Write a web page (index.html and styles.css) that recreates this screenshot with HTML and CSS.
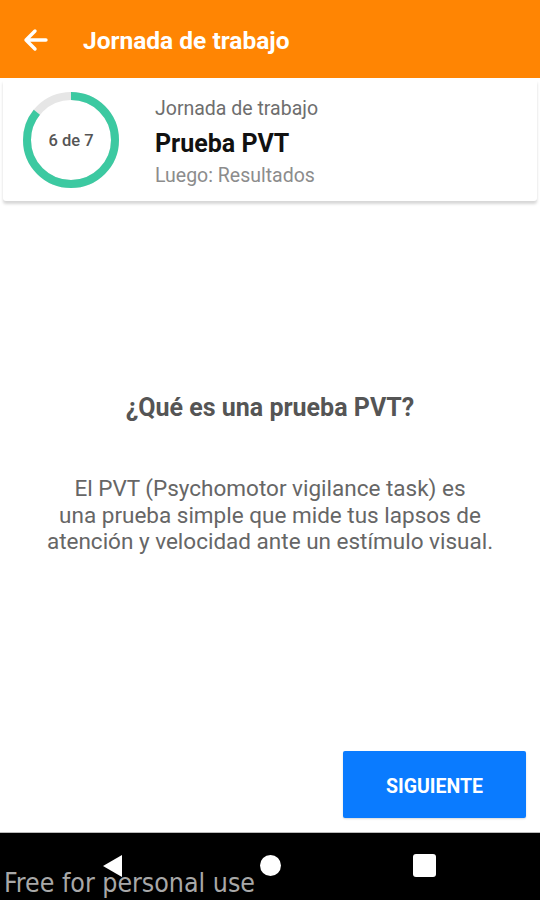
FILE: index.html
```html
<!DOCTYPE html>
<html lang="es">
<head>
<meta charset="utf-8">
<title>Jornada de trabajo</title>
<link rel="stylesheet" href="styles.css">
</head>
<body>
<div class="app">
  <header class="topbar">
    <svg class="back" width="26" height="24" viewBox="0 0 26 24">
      <path d="M24 12H4M13 3L4 12L13 21" fill="none" stroke="#fff" stroke-width="3.4" stroke-linecap="round" stroke-linejoin="round"/>
    </svg>
    <h1 class="title">Jornada de trabajo</h1>
  </header>

  <section class="card">
    <div class="ring">
      <svg width="96" height="96" viewBox="0 0 96 96">
        <circle cx="48" cy="48" r="44" fill="none" stroke="#e6e6e6" stroke-width="8"/>
        <circle cx="48" cy="48" r="44" fill="none" stroke="#3cc9a1" stroke-width="8"
          stroke-dasharray="236.99 276.46" transform="rotate(-90 48 48)"/>
      </svg>
      <span class="ring-label">6 de 7</span>
    </div>
    <div class="card-text">
      <div class="card-sub">Jornada de trabajo</div>
      <div class="card-title">Prueba PVT</div>
      <div class="card-next">Luego: Resultados</div>
    </div>
  </section>

  <main class="content">
    <h2 class="q">¿Qué es una prueba PVT?</h2>
    <p class="desc">El PVT (Psychomotor vigilance task) es<br>una prueba simple que mide tus lapsos de<br>atención y velocidad ante un estímulo visual.</p>
    <div class="actions">
      <button class="btn">SIGUIENTE</button>
    </div>
  </main>

  <nav class="navbar">
    <span class="nav-back"></span>
    <span class="nav-home"></span>
    <span class="nav-recent"></span>
    <span class="watermark">Free for personal use</span>
  </nav>
</div>
</body>
</html>
```

FILE: styles.css
```css
* { box-sizing: border-box; }
html, body { margin: 0; padding: 0; background: #fff; }
body { font-family: Roboto, "Noto Sans", Arial, sans-serif; }

.app {
  width: 540px;
  height: 900px;
  display: flex;
  flex-direction: column;
  overflow: hidden;
}

.topbar {
  height: 78px;
  flex: none;
  background: #ff8503;
  display: flex;
  align-items: center;
  padding-left: 22px;
  padding-top: 3px;
}
.back { display: block; margin-top: -2px; }
.title {
  margin: 0 0 0 35px;
  color: #fff;
  font-size: 24.5px;
  line-height: 30px;
  font-weight: 700;
}

.card {
  flex: none;
  height: 121px;
  margin: 2px 3px 0;
  background: #fff;
  display: flex;
  align-items: center;
  padding-left: 20px;
  box-shadow: 0 3px 3px rgba(0,0,0,0.16);
  border-radius: 0 0 3px 3px;
}
.ring {
  position: relative;
  width: 96px;
  height: 96px;
  flex: none;
  margin-top: -1px;
}
.ring svg { display: block; }
.ring-label {
  position: absolute;
  inset: 0;
  display: flex;
  align-items: center;
  justify-content: center;
  font-size: 16.5px;
  color: #555;
  font-weight: 500;
}
.card-text {
  margin-left: 36px;
  padding-top: 3px;
  display: flex;
  flex-direction: column;
}
.card-sub { font-size: 19.5px; color: #6e6e6e; line-height: 24px; }
.card-title { font-size: 25px; font-weight: 700; color: #111; line-height: 30px; margin-top: 8px; }
.card-next { font-size: 19.5px; color: #8c8c8c; line-height: 24px; margin-top: 5px; }

.content {
  flex: 1;
  display: flex;
  flex-direction: column;
  align-items: center;
  padding-top: 193px;
}
.q {
  margin: 0;
  font-size: 25px;
  line-height: 28px;
  font-weight: 700;
  color: #555;
}
.desc {
  margin: 53px 0 0;
  text-align: center;
  font-size: 22.5px;
  line-height: 26.5px;
  color: #666;
}
.actions {
  margin-top: auto;
  align-self: stretch;
  display: flex;
  justify-content: flex-end;
  padding: 0 14px 14px 0;
}
.btn {
  width: 183px;
  height: 67px;
  border: none;
  border-radius: 2px;
  background: #0a7bff;
  color: #fff;
  font-family: Roboto, Arial, sans-serif;
  font-size: 19.5px;
  font-weight: 700;
  padding: 3px 0 0;
  box-shadow: 0 1px 2px rgba(0,0,0,0.15);
}

.navbar {
  flex: none;
  height: 68px;
  background: #000;
  border-top: 1px solid #bbb;
  position: relative;
  display: flex;
  align-items: center;
  padding-left: 103px;
  padding-bottom: 2px;
}
.nav-back {
  width: 0; height: 0;
  border-top: 11px solid transparent;
  border-bottom: 11px solid transparent;
  border-right: 19px solid #fff;
}
.nav-home {
  width: 21px; height: 21px;
  border-radius: 50%;
  background: #fff;
  margin-left: 138px;
}
.nav-recent {
  width: 23px; height: 23px;
  border-radius: 3px;
  background: #fff;
  margin-left: 132px;
}
.watermark {
  position: absolute;
  left: 4px;
  bottom: 2px;
  font-family: "DejaVu Sans", sans-serif;
  font-stretch: condensed;
  font-size: 26.5px;
  line-height: 30px;
  color: #a8a8a8;
}
```
